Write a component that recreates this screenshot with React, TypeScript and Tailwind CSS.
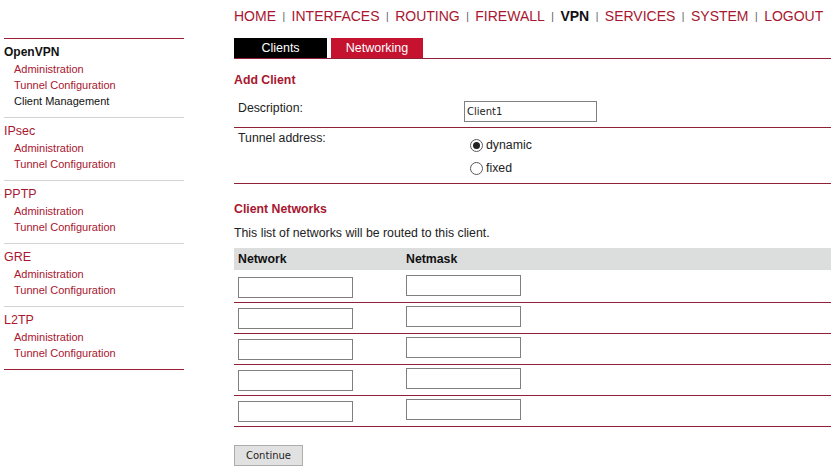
import { useState } from "react";

const navItems = ["HOME", "INTERFACES", "ROUTING", "FIREWALL", "VPN", "SERVICES", "SYSTEM", "LOGOUT"];

const groups = [
  { name: "OpenVPN", active: true, links: ["Administration", "Tunnel Configuration", "Client Management"] },
  { name: "IPsec", links: ["Administration", "Tunnel Configuration"] },
  { name: "PPTP", links: ["Administration", "Tunnel Configuration"] },
  { name: "GRE", links: ["Administration", "Tunnel Configuration"] },
  { name: "L2TP", links: ["Administration", "Tunnel Configuration"] },
];

function Radio({ checked, label, onClick }: { checked: boolean; label: string; onClick: () => void }) {
  return (
    <label className="flex h-[16px] items-center cursor-pointer" onClick={onClick}>
      <span className="flex h-[13px] w-[13px] items-center justify-center rounded-full border border-[#5a5a5a] bg-white">
        {checked && <span className="h-[7px] w-[7px] rounded-full bg-[#222]" />}
      </span>
      <span className="ml-[3px] text-[12.3px] text-[#222]">{label}</span>
    </label>
  );
}

export default function App() {
  const [mode, setMode] = useState("dynamic");
  const [desc, setDesc] = useState("Client1");

  return (
    <div className="flex h-[471px] w-[831px] overflow-hidden bg-white font-['Liberation_Sans',Arial,sans-serif] text-[#222]">
      {/* menu lateral */}
      <aside className="ml-1 w-[180px] shrink-0 pt-[38px]">
        {groups.map((g, i) => (
          <div
            key={g.name}
            className={
              "border-t pb-[8px] " + (i === 0 ? "border-[#9b2036]" : "border-[#d3d3d3]")
            }
          >
            <div
              className={
                "pt-[4px] leading-[18px] " +
                (g.active ? "text-[12px] font-bold text-[#111]" : "text-[12.5px] text-[#a8162f]")
              }
            >
              {g.name}
            </div>
            {g.links.map((l) => (
              <div
                key={l}
                className={
                  "pl-[10px] text-[11px] leading-[16px] " +
                  (l === "Client Management" ? "text-[#111]" : "text-[#a8162f]")
                }
              >
                {l}
              </div>
            ))}
          </div>
        ))}
        <div className="border-t border-[#9b2036]" />
      </aside>

      <main className="ml-[50px] flex-1">
        <nav className="flex h-[32px] items-center text-[14px]">
          {navItems.map((n, i) => (
            <span key={n} className="flex items-center">
              {i > 0 && <span className="mx-[6.5px] text-[10px] text-[#555]">|</span>}
              <span className={n === "VPN" ? "font-bold text-[#111]" : "text-[#a8162f]"}>{n}</span>
            </span>
          ))}
        </nav>

        <div className="mt-[6px] flex h-[21px] gap-1 border-b border-[#8e2038]">
          <div className="flex h-[20px] w-[93px] items-center justify-center bg-black text-[12.5px] text-white">
            Clients
          </div>
          <div className="flex h-[20px] w-[92px] items-center justify-center bg-[#c4122f] text-[12.5px] text-white">
            Networking
          </div>
        </div>

        <h3 className="mb-[9px] pt-[14px] text-[12.3px] font-bold leading-[14px] text-[#a8162f]">Add Client</h3>

        <div className="flex h-[32px] border-b border-[#8e2038] pt-[5px]">
          <div className="w-[230px] pl-1 text-[12.3px] leading-[14px]">Description:</div>
          <input
            value={desc}
            onChange={(e) => setDesc(e.target.value)}
            className="h-[21px] w-[133px] border border-[#7f7f7f] px-[2px] font-['DejaVu_Sans',sans-serif] text-[10px] text-[#222] outline-none"
          />
        </div>

        <div className="flex h-[56px] border-b border-[#8e2038]">
          <div className="w-[236px] pl-1 pt-[3px] text-[12.3px] leading-[14px]">Tunnel address:</div>
          <div className="flex flex-col gap-[7px] pt-[9px]">
            <Radio checked={mode === "dynamic"} label="dynamic" onClick={() => setMode("dynamic")} />
            <Radio checked={mode === "fixed"} label="fixed" onClick={() => setMode("fixed")} />
          </div>
        </div>

        <h3 className="mt-[18px] text-[12.3px] font-bold leading-[14px] text-[#a8162f]">Client Networks</h3>
        <p className="mt-[10px] text-[12.3px] leading-[14px]">This list of networks will be routed to this client.</p>

        <div className="mt-[8px] flex h-[22px] items-center bg-[#dcdddd] text-[12.3px] font-bold text-[#111]">
          <div className="w-[172px] pl-1">Network</div>
          <div>Netmask</div>
        </div>

        {[0, 1, 2, 3, 4].map((r) => (
          <div
            key={r}
            className={
              "flex border-b border-[#8e2038] " + (r === 0 ? "h-[33px] pt-[5px]" : "h-[31px] pt-[3px]")
            }
          >
            <div className="w-[172px] pl-1">
              <input className="h-[21px] w-[115px] border border-[#7f7f7f] outline-none" />
            </div>
            <input className="h-[21px] w-[115px] border border-[#7f7f7f] outline-none" />
          </div>
        ))}

        <button className="mt-[18px] h-[21px] w-[69px] border border-[#adadad] bg-[#e1e1e1] font-['DejaVu_Sans',sans-serif] text-[10px] text-[#222]">
          Continue
        </button>
      </main>
    </div>
  );
}
